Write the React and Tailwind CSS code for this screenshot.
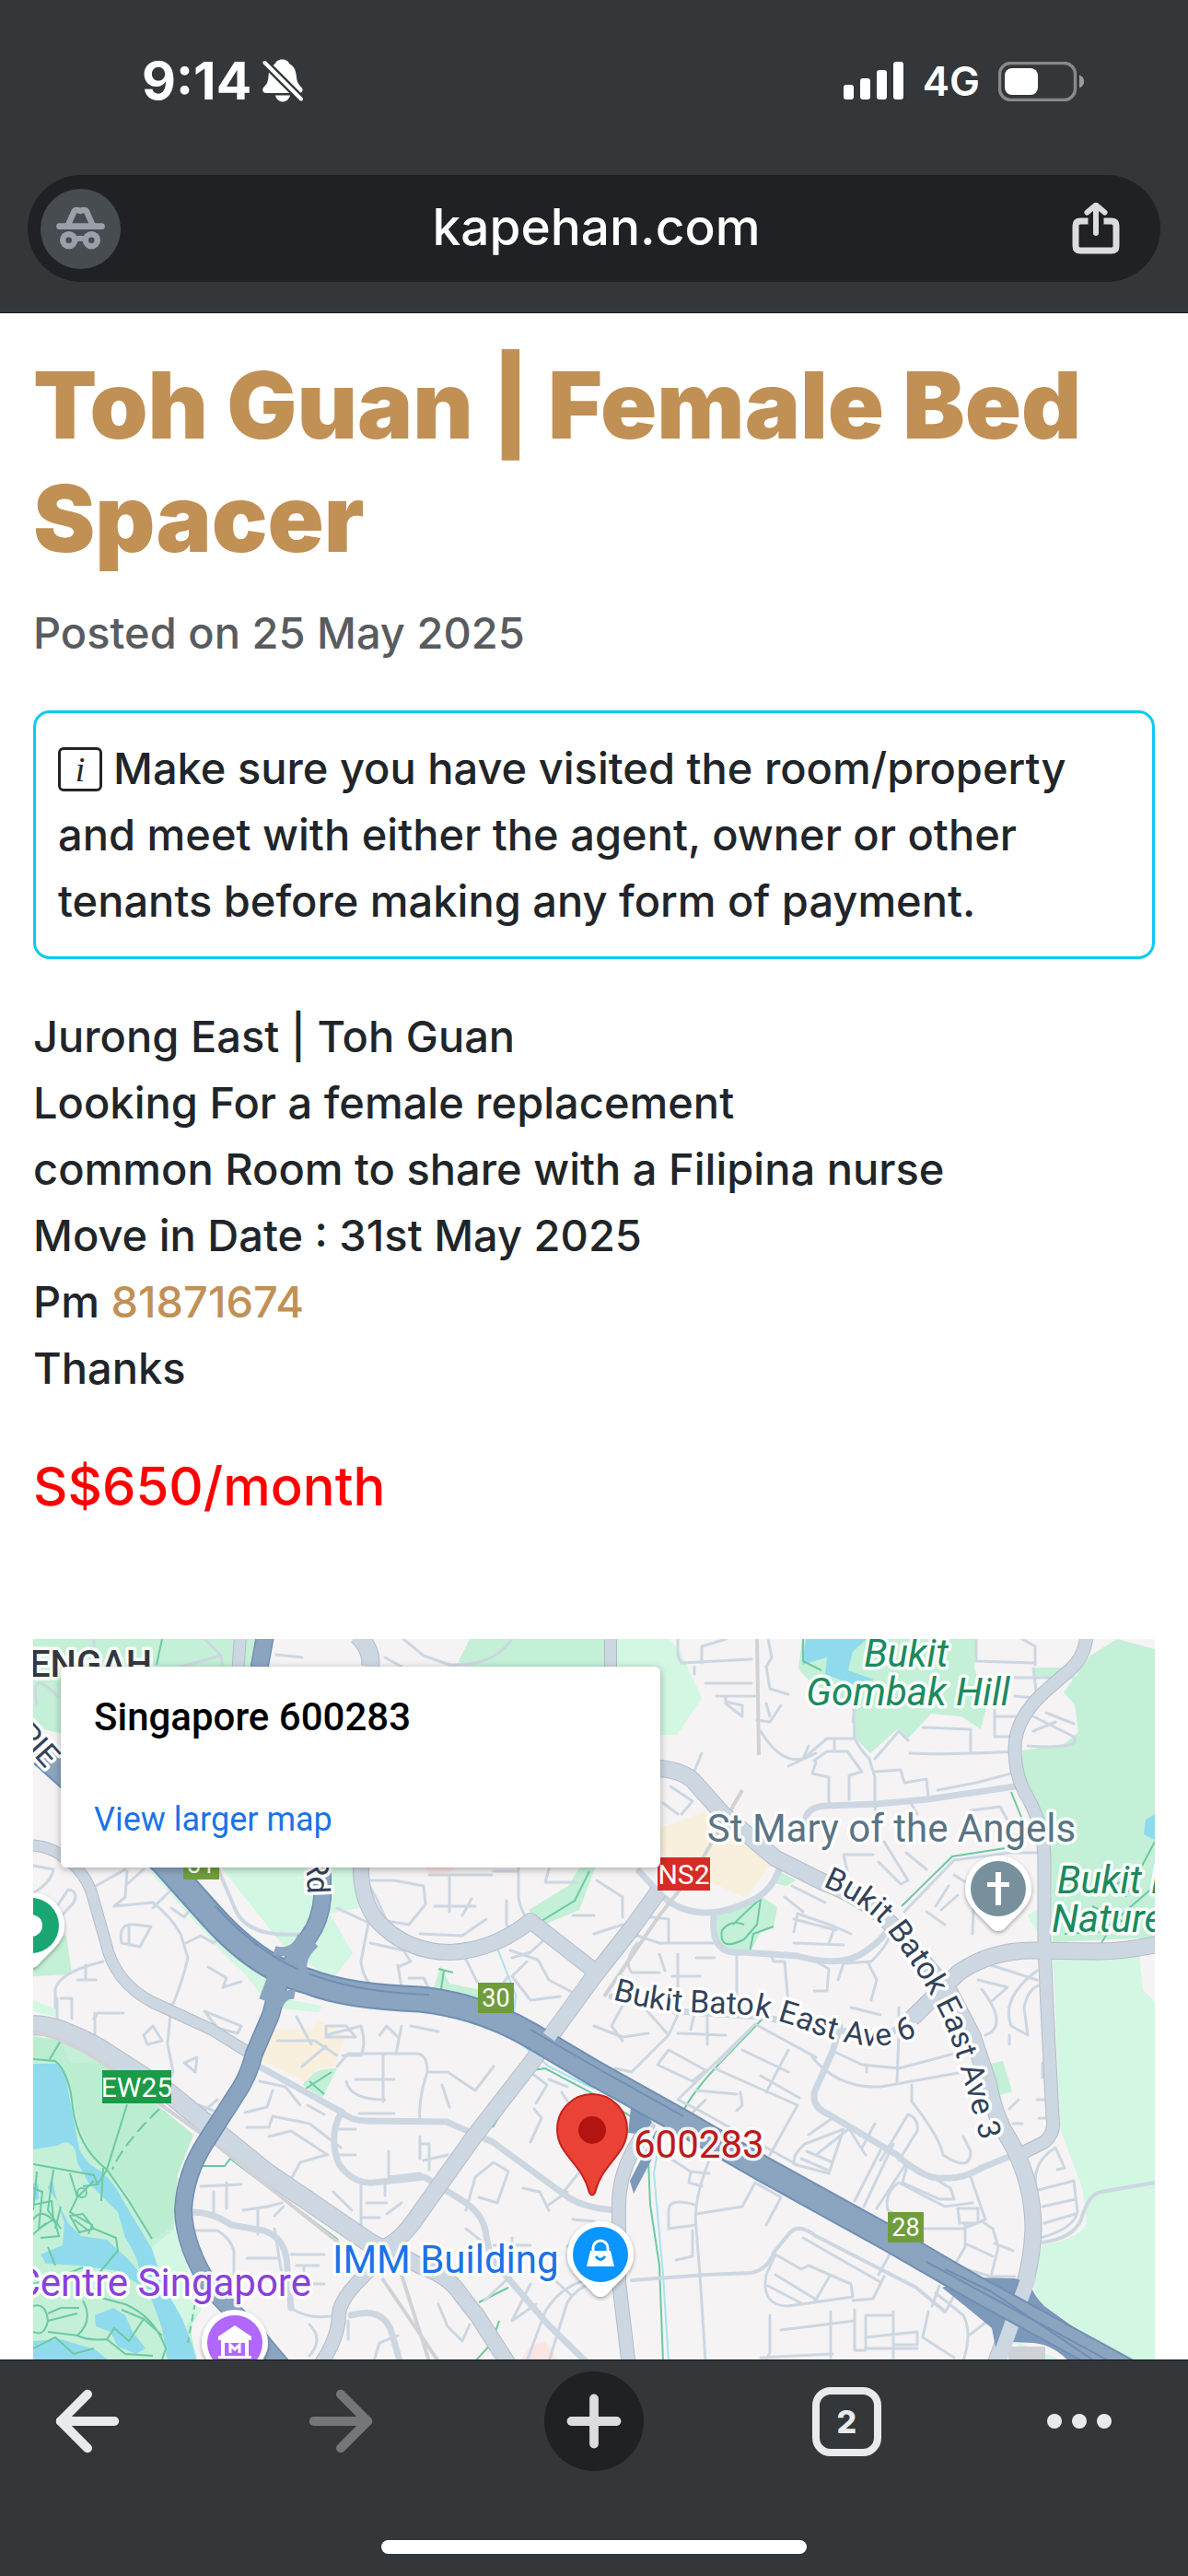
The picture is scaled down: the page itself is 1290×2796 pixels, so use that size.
import { ArrowLeft, ArrowRight, Plus } from 'lucide-react'

const LAND = '#f5f3f4'
const ROAD = '#cdd7e2'
const ROAD_EDGE = '#b4bcc8'
const HIGHWAY = '#8ba4c0'
const HIGHWAY_EDGE = '#6f8fb3'

const listing = [
    'Jurong East | Toh Guan',
    'Looking For a female replacement',
    'common Room to share with a Filipina nurse',
    'Move in Date : 31st May 2025'
]

// main roads, width + path
const mainRoads = [
    [20, 'M0 419 Q22 420 38 428 Q64 438 87 454 L149 494 L194 531 L252 578 L359 651 Q379 666 392 660'],
    [17, 'M379 661 Q398 656 421 621 L478 541 L540 461 L609 366 L650 314 L679 274'],
    [16, 'M357 235 Q352 275 372 304 Q404 340 453 340 Q500 338 540 306 L612 362'],
    [17, 'M670 140 Q700 140 716 153 L749 190 L806 238 L856 263 Q915 285 945 325 L996 385 L1020 431 L1037 481 Q1044 520 1061 545 Q1086 590 1086 640 Q1084 690 1066 728 L1044 790'],
    [13, 'M1144 -4 Q1142 20 1125 34 L1102 54 Q1066 85 1066 118 Q1066 150 1080 172 Q1098 205 1098 240 L1098 331 L1101 401 L1107 520 Q1110 536 1098 546 L1070 560'],
    [17, 'M1222 331 Q1180 340 1150 339 L1085 338 Q1040 338 1005 362 L954 412'],
    [11, 'M0 224 Q22 226 34 238 Q58 252 66 284 L79 330 Q88 372 129 394 L194 424 L236 450'],
    [14, 'M383 670 Q334 710 332 732 Q332 760 310 790'],
    [16, 'M379 658 L421 681 Q453 692 466 714 L482 734 L518 790'],
    [14, 'M669 524 L650 558 Q636 585 636 614 L636 698 L647 790'],
    [18, 'M352 -4 Q369 12 366 30'],
    [12, 'M627 -4 V40'],
    [12, 'M225 -4 L222 40']
]

// side roads
const sideRoads = [
    'M244 463 L334 513 Q345 523 362 523 L449 524 L499 546 L581 606 Q600 618 634 620',
    'M811 248 Q802 274 780 284 Q750 298 728 297 Q700 296 680 276 L658 252',
    'M839 196 Q840 182 862 181 L917 179 L971 174 L1066 160',
    'M628 388 L700 404 L790 410 L870 425 L930 428 L954 412',
    'M876 420 L868 448 L849 490 Q844 508 864 516 L938 560 Q968 588 990 585 Q1010 586 1030 574 L1064 560',
    'M335 513 Q320 540 332 570 Q348 592 370 590 L425 584 L470 612 Q490 626 492 648 L497 672 L560 745 L600 784',
    'M172 622 Q195 622 215 636 L250 642 Q276 650 276 684 L280 726',
    'M345 734 Q382 724 390 755 L398 784',
    'M739 301 Q735 344 770 340 L830 344 Q880 358 905 338 Q925 325 930 310'
]

const streets = [
    // north west
    'M4 70 Q-4 30 26 62 M66 0 V30 M186 0 L204 18 L160 30 M204 18 L206 30 M264 17 L292 20 M402 0 L424 18 L452 28 Q500 30 520 0 M382 20 L400 30',
    'M0 246 L22 250 Q20 264 0 276 M26 290 L38 272 Q50 274 44 286 L24 308 M4 0 M63 271 L100 250 M88 290 L130 286 Q150 302 160 320 L168 346 Q162 372 152 396',
    'M88 290 L100 280 L102 252 M102 266 L120 250 M130 292 L150 272 L172 280 M150 292 L164 302 L170 294 M96 330 Q92 308 110 310 L128 312 L116 334 Z M104 310 V332',
    'M166 330 L182 322 L196 330 L206 320 M190 356 L210 368 L206 378 L226 372 M24 400 V380 Q28 362 76 350 M57 354 V370 M48 370 H68 M30 390 H42 V412 M66 412 L70 406 H98',
    'M26 420 V390 M67 430 V406 M112 384 L148 400 M150 396 L146 440 L152 470 L146 480 L190 516 M120 430 L130 420 L140 436 L124 440 Z M164 460 L178 454 L176 470 Z M186 512 L200 500 M180 506 L196 512',
    'M186 404 L226 420 L222 428 L200 422 Z M560 0 M362 262 L392 262 L424 268 L426 288 L408 310 L384 306 L374 284 Z M430 256 H498 M452 256 V296 M436 290 H480 M466 300 L476 282 M420 320 L466 322 L492 304',
    'M527 248 V280 Q530 300 542 310 M514 284 V310 L524 322 M500 252 H526 M560 250 L556 264 H590 M586 300 H609 M562 320 L540 340 L520 346 M330 292 L364 308 L356 350 Q358 370 372 380',
    'M366 330 L402 338 L410 350 L396 356 M396 354 L400 378 M408 368 H424 L432 384 M468 344 L482 372 M480 392 L500 388 L516 366 M518 338 L548 348 L560 370 L594 388 M536 350 L520 366 L540 392 L572 388',
    // west block between the expressways
    'M286 410 L302 440 M265 436 H306 L330 452 M292 464 L318 442 M318 430 L356 420 Q362 440 356 452 L336 452 M318 420 H340 L350 432 H318 Z M376 430 L384 420 L396 432 M410 420 L440 426 M394 450 L400 420',
    'M330 464 L342 450 H416 Q428 450 428 470 Q418 500 420 522 M380 450 V502 M350 478 H392 M428 470 H450 L480 490 L500 464 M444 484 L452 508 M340 480 Q344 500 382 500 M354 515 H392',
    'M246 480 L274 486 L290 506 M230 514 L254 508 L260 490 M232 530 H256 L260 518 L300 526 L334 552 M256 540 L280 534 L320 560 M330 560 H350 M326 532 H350 M298 506 L316 516',
    'M318 560 L290 568 L278 590 L302 600 M420 540 V564 M420 548 H430 V576 M386 556 V584 L420 580 L436 590 M424 566 L450 560 M382 590 V604 M356 590 V640 Q350 660 384 654 M362 612 H384 M358 628 H376 M326 600 L346 620 M400 612 L384 624',
    'M182 594 L226 592 M196 600 V624 M210 590 V618 M228 620 L254 616 L270 612 M244 618 V646 M262 626 L272 616 M174 642 H200 Q214 650 218 664 V700 M232 672 H266 M262 640 L270 690 M280 668 H316 M286 680 H310 M294 680 V700 M280 700 H316',
    'M280 726 Q300 740 330 734 M300 744 Q316 760 300 778 M440 722 L450 746 L466 762 L474 744 M370 784 L376 764 L396 756 M342 740 V760',
    // around the mall
    'M540 470 L558 484 L546 504 M560 478 L580 486 M574 492 L584 508 M540 546 L552 520 L544 510 M470 620 L480 584 L500 568 L516 578 L504 612 L484 606 M532 596 L550 600 L560 620 M470 640 L490 656 M500 658 H540 M520 650 V674 M576 600 L592 580 M560 614 L580 600',
    'M520 690 L490 718 M540 700 L520 740 L546 722 M560 784 L580 720 Q590 704 609 698 M536 784 L556 730 Q576 696 620 692 M560 690 L584 712 M596 640 L580 660 M586 630 L609 632',
    // centre
    'M609 420 L640 432 L668 428 M640 398 L628 420 L640 436 M660 396 L690 430 L650 470 L632 466 M690 430 L700 408 L684 400 M720 398 L714 424 M732 400 V440 M700 428 L752 430 M678 462 L690 446 L730 468 L716 480 Z M744 460 L784 418 L850 454 M784 418 L700 500 L724 512 L832 572 M710 520 L730 500',
    'M720 490 L764 494 M770 446 L820 470 M740 466 L830 506 L800 560 M820 446 L796 492 M790 474 L832 498 M768 492 L770 506 L764 512 M870 448 L900 462 L940 466 L1008 448 M846 454 Q874 488 920 486 L1010 470 M940 400 V430 L938 480 M905 462 V470',
    'M954 484 V502 Q984 540 988 560 Q1018 580 1018 556 L1010 540 M884 533 L850 560 M842 538 L868 520 M880 532 L864 580 L826 570 Q824 560 838 548 Z M840 556 L868 568 M834 564 L862 576 M886 532 L904 560 M914 526 L900 552 M920 555 L892 610 M934 548 L902 616 M946 572 L916 618',
    'M920 566 L950 516 Q962 520 960 534 L940 566 M950 568 L996 596 L1000 608 H984 L944 590 Z M940 590 L990 616 L1020 612 M1018 584 L1034 630 L1010 640 M1004 618 H1026 V634 H1006 Z M928 620 Q924 600 940 590 M928 620 L968 640 H1012',
    'M1012 634 V660 L1000 680 L1040 692 L1048 660 L1042 640 L1030 632 M1012 656 L1042 670 M1044 656 L1064 664 M1042 692 H1066 M686 560 L714 578 L734 580 M714 578 L712 590 L726 594 M734 566 Q716 610 720 640 L724 690 L730 784 M720 624 L770 616 L784 590 L812 606 L796 636',
    'M718 614 Q690 606 690 620 V640 L720 636 M716 642 V670 L698 674 M806 668 L834 684 L842 680 L888 700 L890 714 L820 724 Q790 724 796 690 Z M798 702 L836 722 M806 690 L852 718 M848 720 L866 690 M890 718 L912 716 L924 692 M836 650 L920 698 M930 668 L918 690',
    'M800 734 V774 L796 784 M812 750 L892 740 M866 730 V780 M892 728 V772 H904 V734 H934 M904 758 L960 752 V766 H934 V730 M934 768 V784 M904 770 H960 M790 780 L868 776 M980 710 L1010 734 Q1020 752 1010 784 M972 730 L966 758 L1000 780 M984 702 L976 724 M1000 712 L992 728 M1016 756 L1034 742',
    // north east
    'M700 0 V18 L704 26 L780 22 M726 26 V8 L752 0 M740 0 M718 30 V38 M730 48 H780 M742 62 H784 M752 62 L752 70 L770 84 V72 L752 68 M798 0 L802 20 L796 30 L800 54 L820 60 M786 88 L800 90 L812 72 M796 70 L800 84',
    'M790 100 Q812 136 836 130 L862 108 H890 M836 130 L842 116 M820 138 L850 124 M870 108 V122 M848 132 L862 122 H884 L900 144 L886 148 V174 M864 180 V150 L846 146 L850 134 M891 76 L892 108 Q898 120 908 130 L914 150 V180 M894 60 L890 90',
    'M914 130 L940 100 L950 110 M914 144 L942 142 L946 156 L970 152 L972 172 M966 96 L1018 98 V122 M952 124 Q990 126 1066 122 M982 164 L1024 156 L1062 146 V124 M1024 0 V24 L1088 26 M1074 0 L1088 8 V28 M1066 42 H1108 M1066 62 L1090 64 L1086 32 M1044 64 V84 H1076 M1044 84 L1044 106 H1070',
    'M716 148 L726 124 M692 160 L716 176 L704 190 M684 178 L700 190 M1086 84 L1130 106 Q1140 120 1080 116 M1100 80 L1130 92 M1110 90 L1086 100',
    'M914 180 L916 200 M953 178 L960 190 M1018 186 L1050 182 L1062 204 L1058 228 M924 220 L950 262 L942 266 L918 242 M912 234 H880 L884 252 M948 232 L970 250 M946 296 L1000 240 L1060 232 L1096 232 M980 290 L994 268 M970 296 L990 310 M986 294 L1004 278 M1000 256 L1022 270 L1020 320',
    'M824 268 L860 286 M816 280 L836 296 M826 318 L830 298 L870 312 L888 320 M826 304 L872 316 M826 330 L880 332 M870 314 L864 330 M612 262 L640 280 V302 M609 320 L640 310 M656 300 L690 304 V328 M650 320 L680 330 H738 M656 330 Q640 350 650 362 H680 M700 342 V386 M764 342 V394 M720 346 H740',
    'M640 366 V396 M680 342 L686 360 M694 366 H724 M800 340 L804 350 H816 L820 396 M850 350 L864 358 L862 382 H848 M874 370 L880 352 L910 350 Q930 330 930 320 M906 350 L916 370 L910 392 M888 400 L920 408 M1026 370 L1058 378 L1040 394 M1040 354 L1090 370 M1030 380 Q1060 420 1034 430',
    'M1090 360 Q1050 390 1062 420 L1080 430 L1076 400 Q1080 380 1092 376 M1060 440 V430 M1096 460 V476 M1060 510 L1070 500 M1090 500 H1100 M1064 526 H1074 M1092 520 H1102',
    'M1084 600 L1130 588 L1134 622 Q1130 640 1094 650 M1096 616 L1132 608 M1090 600 Q1082 570 1110 552 L1120 574 L1112 576 M1098 634 L1132 624'
]

function Shield({ x, y, w = 39, h = 33, fill = '#6f9d3c', size = 27, children }) {
    return (
        <g>
            <rect x={x} y={y} width={w} height={h} fill={fill} />
            <text x={x + w / 2} y={y + h / 2 + size * 0.36} fontSize={size} fill="#fff" textAnchor="middle">
                {children}
            </text>
        </g>
    )
}

function PlacePin({ x, y, fill, children }) {
    return (
        <g transform={`translate(${x} ${y})`}>
            <path
                d="M0 -36 A36 36 0 0 1 36 0 C36 18 22 26 8 42 Q0 50 -8 42 C-22 26 -36 18 -36 0 A36 36 0 0 1 0 -36Z"
                fill="#fff"
                filter="url(#pinShadow)"
            />
            <circle r="30" fill={fill} />
            {children}
        </g>
    )
}

function MapCanvas() {
    return (
        <svg
            viewBox="0 0 1218 782"
            className="block w-full h-auto font-[Roboto,sans-serif]"
            role="img"
            aria-label="Map of Singapore 600283"
        >
            <defs>
                <filter id="pinShadow" x="-30%" y="-30%" width="160%" height="160%">
                    <feDropShadow dx="0" dy="2" stdDeviation="2" floodOpacity="0.35" />
                </filter>
                <path id="ave6" d="M629 391 Q670 403 712 405 L780 408 Q808 413 832 422 Q870 438 912 442 Q944 442 1000 412" />
                <path id="ave3" d="M857 268 Q905 288 930 320 Q968 370 988 412 Q1006 455 1030 550" />
            </defs>
            <rect width="1218" height="782" fill={LAND} />

            {/* Parks */}
            <g fill="#c3f0d6">
                <path d="M0 0 H247 L240 40 L60 110 L0 95Z" />
                <path d="M474 0 H630 V60 H500 L462 24Z" />
                <path d="M835 0 H1024 L1022 31 L1035 74 L1029 98 L1008 84 L975 81 L950 108 L938 98 L909 124 L893 108 L891 71 Q840 50 831 31Z" />
                <path d="M1177 0 L1218 11 V324 L1107 329 L1105 234 L1074 154 V121 L1119 114 L1135 101 L1131 71 L1119 58 L1148 18Z" />
                <path d="M1086 31 H1131 V44 L1086 40Z M0 340 L36 321 L42 364 L0 366Z" />
                <path d="M739 301 L790 279 L808 291 L804 314 L790 318 L778 341 L749 339Q738 330 739 301Z" />
                <path d="M806 250 L828 262 L818 268 L800 264Z M538 294 L581 268 L598 240 L612 244 L593 294 L552 311Z" />
                <path d="M375 374 L435 378 L443 354 L452 374 L482 380 L520 404 L482 400 L380 386Z M293 484 Q300 466 330 466 L314 498Z" />
                <path d="M1039 461 L1053 458 L1063 491 L1047 496Z" />
                <path d="M0 431 L30 436 L75 461 L137 508 L174 538 L157 581 L153 640 L182 728 L170 748 L178 782 H0Z" />
            </g>
            <path d="M40 460 L75 461 L137 508 L174 538 L157 581 L153 628 Q148 645 129 651 Q100 590 70 568 Q46 530 40 480 Q30 456 0 454 V431 L30 436Z" fill="#bbedd1" />
            <g fill="#d2f7e2">
                <path d="M194 235 H357 L360 291 L322 298 L347 341 L326 368 L277 340Z" />
                <path d="M125 250 L149 250 L260 360 L255 400Q240 370 210 345Z" />
                <path d="M630 0 H690 L702 12 L726 64 L699 104 L630 104Z" />
                <path d="M1107 348 L1201 343 L1205 381 L1218 394 V782 H1185 L1094 721 L1082 694 L1096 658 Q1140 650 1144 634 L1140 598 L1115 531 L1109 381Z" />
                <path d="M129 660 L153 640 L182 728 L162 750 L140 700Z M270 390 L314 398 L310 405 L268 401Z M0 392 L24 402 V410 L0 404Z" />
                <path d="M1070 764 L1115 782 H1060Z M1080 300 L1096 290 V328Z" />
            </g>
            <g fill="#f8f0dd">
                <path d="M681 205 L728 188 L806 238 L774 281 L745 268 L708 254 L681 230Z" />
                <path d="M260 424 L305 423 L309 413 L340 431 L326 464 L310 466 L296 480 L248 458Z" />
            </g>
            <path d="M426 248 H460 L450 254 H430Z M540 768 L556 762 L570 784 H528Z" fill="#fbe4e1" />
            <rect x="1059" y="768" width="40" height="16" fill="#ced1d6" />

            {/* Water */}
            <g fill="#90daee">
                <path d="M0 461 H26 Q36 466 38 490 L50 554 Q60 572 74 578 Q88 590 98 610 L129 662 L138 690 L145 708 L162 738 L172 764 L178 784 H146 L140 748 L129 718 L114 700 L92 686 L50 680 L14 678 L8 668 L32 658 L34 634 L26 610 L16 596 L20 584 L26 610 L38 634 L52 648 L80 652 L104 674 L116 688 Q114 670 100 650 L92 622 L60 590 L48 568 L46 556 Q40 540 26 550 L0 554Z" />
                <path d="M0 762 L30 760 L67 771 L83 784 H0Z M67 734 L87 726 L100 734 L108 752 L122 770 L112 776 L92 768 L84 752 L68 746Z M0 590 L6 592 V608 L0 610Z" />
                <path d="M839 0 H905 L890 14 L885 34 L913 44 L889 49 L860 38 L862 20 L835 28Z M1218 190 L1208 196 L1206 212 L1218 218Z" />
            </g>
            <g fill="none" stroke="#6cc9a2" strokeWidth="2">
                <path d="M0 456 L24 458 Q38 470 42 500 Q46 550 80 576 L104 610 L129 651 M102 505 L80 576 L70 592 M30 436 L18 456" />
                <path d="M137 510 Q96 550 86 576" strokeDasharray="14 6" />
                <path d="M0 570 L66 582 L70 592 L54 594 M4 578 L0 620 M22 576 L16 620 L30 640 M40 580 L48 606 L40 622 L64 636 L60 646 M48 606 L66 588 M0 596 L10 600 L6 640 L22 630 L20 610 L0 614 M40 626 L50 644 L66 640 L54 624Z M66 640 L90 650 L92 664 L70 690" />
                <path d="M0 630 Q10 616 24 634 L28 648 L8 650 M16 660 L24 680 M0 646 L14 634 M30 616 L24 640 M44 630 L60 642 M0 700 L30 692 L54 682 M76 574 L74 610" />
                <path d="M0 724 Q14 720 16 740 Q12 758 0 752 M16 740 L48 732 M16 732 L30 726 H50 M54 718 Q66 740 48 756 L16 752 M48 756 Q60 762 80 760 L88 748 L104 762 L120 738 L96 728 M62 712 L100 722 Q132 736 144 770 L140 782 M80 760 L100 776 L130 778 M120 738 L140 756 M0 770 L24 758 L44 776 L66 770" />
                <circle cx="53" cy="601" r="5" />
                <path d="M174 572 H208 L214 564 L331 652 M499 530 L512 508 L524 480 L542 468 L556 466 L609 494 L652 520 L658 532 L634 580 M704 516 Q714 494 744 462 L794 410 M668 566 L670 614 L680 680 L684 784" />
                <path d="M943 290 L998 236 L1062 226 M1062 166 L1074 196 M760 310 Q780 290 790 282 L786 310 L772 326 Q744 340 748 316 Q758 304 772 310 M778 340 L782 320 L804 312 M552 306 L588 284 L604 252 M516 704 L484 720 M506 740 L498 764 L480 784 L478 790" />
                <path d="M1186 280 L1218 220 M1170 270 L1190 258 M1120 320 L1160 318 L1218 268 M1150 290 L1190 310 M1160 330 L1180 296 M296 488 L324 470 M300 480 L316 494 M440 358 L456 362 M446 360 L442 386 L390 384 M134 28 L140 0 M836 0 V24 L856 34" />
                <path d="M176 720 L168 764" strokeDasharray="8 5" />
            </g>
            <g fill="none" stroke="#a9e2ef" strokeWidth="2">
                <path d="M504 336 L524 386 L522 410 M530 440 L560 464 L609 488 M678 556 L674 580 L684 690 L690 784 M980 384 L950 424" />
            </g>

            {/* Streets */}
            <g fill="none" stroke={ROAD} strokeLinejoin="round" strokeLinecap="round">
                {streets.map(d => <path key={d} d={d} strokeWidth="3" />)}
                {sideRoads.map(d => <path key={d} d={d} strokeWidth="7" />)}
                <path d="M650 696 L730 690 L780 688 Q798 684 804 666 L822 644 Q832 634 850 648 L959 704 L990 730" strokeWidth="4" />
                <path d="M1096 655 Q1130 650 1138 630 Q1146 602 1160 600 L1218 590 M200 248 L218 290 Q230 326 294 320" strokeWidth="4" />
            </g>
            <path d="M786 0 L788 126 M770 164 L720 250 L680 300 L620 388 M379 694 L440 784 M400 690 L430 784" fill="none" stroke="#d0d2d6" strokeWidth="4" />
            <g fill="none" strokeLinejoin="round">
                {mainRoads.map(([width, d]) => <path key={d} d={d} stroke={ROAD_EDGE} strokeWidth={width + 2} />)}
                {mainRoads.map(([width, d]) => <path key={d} d={d} stroke={ROAD} strokeWidth={width} />)}
            </g>
            <path d="M0 426 Q50 438 100 478 L190 542 L340 662" fill="none" stroke="#d0d2d6" strokeWidth="4" />

            {/* Expressways */}
            <path d="M1020 693 L1066 694 L1082 699 Q1086 712 1098 724 L1190 790 H1130 Q1110 766 1086 764 L1061 763 L1048 784 L1041 748 L1012 724 L987 704Z" fill="#7c99ba" />
            <path d="M1082 690 L1046 790" stroke={ROAD} strokeWidth="16" />
            <path d="M650 500 L672 524 L664 538 L646 536Z M676 534 L690 530 L652 602 L648 588Z" fill="#7c99ba" />
            <g fill="none" strokeLinejoin="round">
                <path d="M252 -4 L244 40 L314 240 V281 Q312 305 300 322 Q288 340 268 371 L258 408 L240 450 Q234 475 220 495 L188 545 Q165 580 163 620 Q164 660 194 706 L244 758 L276 796" stroke={HIGHWAY_EDGE} strokeWidth="20" />
                <path d="M10 125 L141 242 L194 301 Q245 358 300 372 Q340 388 420 391 Q485 398 540 430 L609 471 L704 524 L794 576 L930 651 L1020 703 L1190 796" stroke={HIGHWAY_EDGE} strokeWidth="29" />
                <path d="M252 -4 L244 40 L314 240 V281 Q312 305 300 322 Q288 340 268 371 L258 408 L240 450 Q234 475 220 495 L188 545 Q165 580 163 620 Q164 660 194 706 L244 758 L276 796" stroke={HIGHWAY} strokeWidth="17" />
                <path d="M10 125 L141 242 L194 301 Q245 358 300 372 Q340 388 420 391 Q485 398 540 430 L609 471 L704 524 L794 576 L930 651 L1020 703 L1190 796" stroke={HIGHWAY} strokeWidth="25" />
                <path d="M198 290 Q250 348 310 367 Q360 384 430 386 M540 424 L620 470 L706 518 M970 676 L1060 725 L1180 790 M990 684 L1040 708 L1150 782" stroke={HIGHWAY_EDGE} strokeWidth="2" />
                <path d="M262 338 Q284 344 292 322 M300 372 Q282 352 306 330 M250 392 L262 360 M284 386 Q272 384 266 398" stroke={HIGHWAY} strokeWidth="10" />
                <path d="M560 432 L600 376" stroke={ROAD} strokeWidth="15" />
            </g>

            {/* Road labels */}
            <g fill="#33435a" fontSize="34" stroke="#fff" strokeWidth="7" strokeLinejoin="round" paintOrder="stroke">
                <text><textPath href="#ave6">Bukit Batok East Ave 6</textPath></text>
                <text><textPath href="#ave3">Bukit Batok East Ave 3</textPath></text>
                <text transform="translate(-20 104) rotate(48)">PIE</text>
                <text transform="translate(298 277) rotate(88)" textAnchor="end">Rd</text>
            </g>

            <Shield x={163} y={228}>31</Shield>
            <Shield x={483} y={373}>30</Shield>
            <Shield x={928} y={622}>28</Shield>
            <Shield x={75} y={468} w={75} h={36} size={30} fill="#1b9a48">EW25</Shield>
            <Shield x={678} y={237} w={57} h={36} size={30} fill="#d72c25">NS2</Shield>

            {/* Place labels */}
            <g fontSize="42" stroke="#fff" strokeWidth="7" strokeOpacity="0.9" strokeLinejoin="round" paintOrder="stroke">
                <text x="-4" y="41" fontSize="40" fontWeight="500" fill="#33383f">ENGAH</text>
                <g fill="#1b8a5f" fontStyle="italic">
                    <text x="948" y="30" textAnchor="middle">Bukit</text>
                    <text x="950" y="72" textAnchor="middle">Gombak Hill</text>
                    <text x="1112" y="276">Bukit B</text>
                    <text x="1106" y="318">Nature</text>
                </g>
                <text x="932" y="220" textAnchor="middle" fill="#5b7484">St Mary of the Angels</text>
                <text x="652" y="563" fill="#bd1a1a">600283</text>
                <text x="325" y="688" fill="#1a73e8">IMM Building</text>
                <text x="302" y="713" textAnchor="end" fill="#8a3fdc">Centre Singapore</text>
            </g>

            {/* Pins */}
            <PlacePin x={-2} y={311} fill="#1aa673">
                <circle r="12" fill="#fff" />
            </PlacePin>
            <PlacePin x={1048} y={271} fill="#78909c">
                <path d="M-3 -18 H3 V-7 H12 V-2 H3 V18 H-3 V-2 H-12 V-7 H-3Z" fill="#fff" />
            </PlacePin>
            <PlacePin x={616} y={668} fill="#0a95ff">
                <path d="M-11 -4 H11 L15 13 H-15Z" fill="#fff" />
                <path d="M-8 -4 V-7 A8 8 0 0 1 8 -7 V-4" fill="none" stroke="#fff" strokeWidth="3" />
                <path d="M-5 2 Q0 9 5 2" fill="none" stroke="#0a95ff" strokeWidth="3" />
            </PlacePin>
            <PlacePin x={219} y={764} fill="#b168ff">
                <path d="M-18 -7 L0 -19 L18 -7 V-3 H-18Z M-15 -3 H-11 V14 H-15Z M11 -3 H15 V14 H11Z M-18 14 H18 V17 H-18Z M-14 -3 H14 V0 H-14Z" fill="#fff" />
                <path d="M-5 11 V2 L0 7 L5 2 V11" fill="none" stroke="#fff" strokeWidth="3" />
            </PlacePin>
            <path
                d="M607 494 A38 38 0 0 1 645 532 C645 560 618 568 610 601 Q607 606 604 601 C596 568 569 560 569 532 A38 38 0 0 1 607 494Z"
                fill="#ea4335"
                stroke="#c5221f"
                strokeWidth="2"
            />
            <circle cx="607" cy="533" r="15" fill="#b31412" />
        </svg>
    )
}

function StatusBar() {
    return (
        <div className="flex items-center justify-between pl-[154px] pr-[113px] h-[54px] text-white">
            <div className="flex items-center gap-3">
                <span className="text-[57px] leading-[54px] font-bold">9:14</span>
                <svg viewBox="0 0 44 48" className="w-[44px] h-[48px]" aria-hidden="true">
                    <path
                        d="M21.5 .5C26 .5 28.5 3 29.5 5.5C35 8 36.5 14 37 20C37.5 26 40 28 42.5 31C45 34 43 37 40 37H4C0 37-1 33 1.5 30.5C5 27 6 25 6.5 19C7 12 9 8 13.5 5.5C14.5 3 17 .5 21.5 .5Z"
                        fill="#fff"
                    />
                    <path d="M14 39.5h16c-1 4-4 7-8 7s-7-3-8-7z" fill="#fff" />
                    <path d="M-2 -.5L46 47.5" stroke="#33373a" strokeWidth="9" />
                    <path d="M2.5 4L42 43.5" stroke="#fff" strokeWidth="4" strokeLinecap="round" />
                </svg>
            </div>
            <div className="flex items-center gap-5">
                <svg viewBox="0 0 66 42" className="w-[66px] h-[42px]" aria-hidden="true" fill="#fff">
                    <rect x="0" y="25" width="11" height="16" rx="3" />
                    <rect x="18" y="18" width="11" height="23" rx="3" />
                    <rect x="36" y="9" width="11" height="32" rx="3" />
                    <rect x="54" y="0" width="11" height="41" rx="3" />
                </svg>
                <span className="text-[44px] leading-[54px] font-semibold">4G</span>
                <svg viewBox="0 0 93 43" className="w-[93px] h-[43px]" aria-hidden="true">
                    <rect x="1.5" y="1.5" width="82" height="40" rx="12" fill="none" stroke="#87898b" strokeWidth="3.4" />
                    <rect x="7" y="7" width="36" height="29" rx="8" fill="#fff" />
                    <path d="M88 14.5C95 17 95 26 88 28.500Z" fill="#9b9c9e" />
                </svg>
            </div>
        </div>
    )
}

function AddressBar() {
    return (
        <div className="flex items-center justify-between mx-[30px] h-[116px] pl-[14px] pr-[44px] rounded-full bg-[#202125]">
            <svg viewBox="0 0 87 87" className="w-[87px] h-[87px]" role="img" aria-label="Incognito">
                <circle cx="43.500" cy="43.500" r="43.500" fill="#464c4f" />
                <g fill="none" stroke="#9b9fa9" strokeLinecap="round">
                    <path d="M20.500 40.700H66.500" strokeWidth="6.700" />
                    <path d="M30 39L36.500 24.500Q38 22 43.200 24Q48.500 22 50 24.500L56.500 39" strokeWidth="6.500" strokeLinejoin="round" />
                    <circle cx="30.700" cy="55.700" r="6.500" strokeWidth="6.400" />
                    <circle cx="55.300" cy="55.700" r="6.500" strokeWidth="6.400" />
                    <path d="M38 54.500Q43 53 48 54.500" strokeWidth="6" />
                </g>
            </svg>
            <span className="pb-1 text-[55px] leading-[72px] font-medium text-white">kapehan.com</span>
            <button type="button" aria-label="Share">
                <svg viewBox="0 0 52 56" className="w-[52px] h-[56px]" fill="none" stroke="#dcdce0">
                    <path d="M17.500 20H9Q4 20 4 25V47Q4 52 9 52H43Q48 52 48 47V25Q48 20 43 20H34.500" strokeWidth="7" />
                    <path d="M26 33V4M16.500 10.500L26 2.500L35.500 10.500" strokeWidth="6" strokeLinecap="round" strokeLinejoin="round" />
                </svg>
            </button>
        </div>
    )
}

function Toolbar() {
    return (
        <footer className="bg-[#33373a] border-t border-[#17181a] pt-3 pb-6">
            <nav className="flex items-center justify-between pl-[41px] pr-[86px]">
                <button type="button" aria-label="Back" className="flex items-center justify-center w-[108px] h-[108px] text-[#e8ebee]">
                    <ArrowLeft className="w-[100px] h-[100px]" strokeWidth={2.4} />
                </button>
                <button type="button" aria-label="Forward" className="flex items-center justify-center w-[108px] h-[108px] text-[#757678]">
                    <ArrowRight className="w-[100px] h-[100px]" strokeWidth={2.4} />
                </button>
                <button type="button" aria-label="New tab" className="flex items-center justify-center w-[108px] h-[108px] rounded-full bg-[#202125] text-[#dcdce0]">
                    <Plus className="w-[84px] h-[84px]" strokeWidth={2.8} />
                </button>
                <button type="button" aria-label="Tabs" className="flex items-center justify-center w-[108px] h-[108px]">
                    <span className="flex items-center justify-center w-[75px] h-[75px] rounded-[20px] border-8 border-[#e8ebee] text-[34px] font-extrabold text-[#e8ebee]">
                        2
                    </span>
                </button>
                <button type="button" aria-label="More" className="flex items-center justify-center w-16 h-[108px]">
                    <svg viewBox="0 0 70 16" className="w-[70px] h-4 shrink-0" fill="#e8ebee">
                        <circle cx="8" cy="8" r="8" />
                        <circle cx="35" cy="8" r="8" />
                        <circle cx="62" cy="8" r="8" />
                    </svg>
                </button>
            </nav>
            <div className="w-[462px] h-[15px] mx-auto mt-[75px] rounded-full bg-white" />
        </footer>
    )
}

export default function App() {
    return (
        <div className="min-h-screen flex flex-col bg-white font-[Inter,sans-serif] text-[#212529]">
            <header className="bg-[#33373a] border-b border-[#17181a] pt-[61px] pb-[33px]">
                <StatusBar />
                <div className="mt-[75px]">
                    <AddressBar />
                </div>
            </header>

            <main className="flex-1 px-9 pt-[38px]">
                <h1 className="text-[101px] leading-[123px] font-black text-[#c19055]">
                    Toh Guan | Female Bed Spacer
                </h1>
                <p className="mt-[27px] text-[47px] leading-[72px] font-medium text-[#595c5f]">Posted on 25 May 2025</p>

                <div className="mt-12 p-6 border-3 border-[#0dcaf0] rounded-[18px] text-[47px] leading-[72px] font-medium">
                    <span className="inline-flex items-center justify-center w-12 h-12 mr-3 border-3 border-[#212529] rounded-md align-[3px] font-['Liberation_Serif',serif] italic text-[38px] leading-[42px]">
                        i
                    </span>
                    Make sure you have visited the room/property and meet with either the agent, owner or other
                    tenants before making any form of payment.
                </div>

                <div className="mt-12 text-[47px] leading-[72px] font-medium">
                    {listing.map(line => (
                        <p key={line}>{line}</p>
                    ))}
                    <p>
                        Pm <a href="tel:81871674" className="text-[#c19055]">81871674</a>
                    </p>
                    <p>Thanks</p>
                </div>

                <p className="mt-14 text-[58px] leading-[72px] font-medium text-[#ff0000]">S$650/month</p>

                {/* Map */}
                <div className="relative mt-[130px] overflow-hidden">
                    <MapCanvas />
                    <div className="absolute left-[30px] top-[30px] w-[651px] max-w-full px-9 py-[30px] rounded-md bg-white shadow-[0_2px_8px_rgba(0,0,0,0.3)] font-[Roboto,sans-serif]">
                        <p className="text-[42px] leading-[50px] font-medium text-black">Singapore 600283</p>
                        <a href="#map" className="block mt-16 text-[36px] leading-[44px] text-[#1a73e8]">View larger map</a>
                    </div>
                </div>
            </main>

            <Toolbar />
        </div>
    )
}
